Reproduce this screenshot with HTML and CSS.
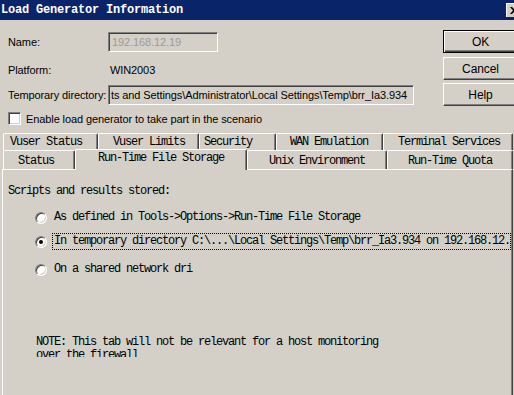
FILE: index.html
```html
<!DOCTYPE html>
<html>
<head>
<meta charset="utf-8">
<link rel="stylesheet" href="styles.css">
</head>
<body>
<div class="win">
  <div class="title">
    <span class="title-text">Load Generator Information</span>
    <span class="close"><svg width="8" height="7" viewBox="0 0 8 7"><path d="M0 0h2l2 2 2-2h2L5 3.5 8 7H6L4 5 2 7H0l3-3.5z" fill="#000"/></svg></span>
  </div>
  <div class="top">
    <div class="form">
      <div class="row r-name"><span class="lbl">Name:</span><div class="field f-name">192.168.12.19</div></div>
      <div class="row r-plat"><span class="lbl">Platform:</span><span class="val">WIN2003</span></div>
      <div class="row r-temp"><span class="lbl">Temporary directory:</span><div class="field f-temp">ts and Settings\Administrator\Local Settings\Temp\brr_Ia3.934</div></div>
      <div class="check"><span class="cbox"></span><span>Enable load generator to take part in the scenario</span></div>
    </div>
    <div class="buttons">
      <div class="btn btn-default"><span>OK</span></div>
      <div class="btn btn-cancel"><span>Cancel</span></div>
      <div class="btn btn-help"><span>Help</span></div>
    </div>
  </div>
  <div class="tabs">
    <div class="tabrow row1">
      <div class="tab t-vs">Vuser Status</div>
      <div class="tab t-vl">Vuser Limits</div>
      <div class="tab t-sec">Security</div>
      <div class="tab t-wan">WAN Emulation</div>
      <div class="tab t-ts">Terminal Services</div>
    </div>
    <div class="tabrow row2">
      <div class="tab t-st">Status</div>
      <div class="tab t-rtfs sel">Run-Time File Storage</div>
      <div class="tab t-ue">Unix Environment</div>
      <div class="tab t-rtq">Run-Time Quota</div>
    </div>
  </div>
  <div class="panel">
    <div class="heading">Scripts and results stored:</div>
    <div class="opt opt1"><span class="radio"></span><span class="otext">As defined in Tools-&gt;Options-&gt;Run-Time File Storage</span></div>
    <div class="opt opt2"><span class="radio on"></span><span class="otext focus">In temporary directory C:\...\Local Settings\Temp\brr_Ia3.934 on 192.168.12.</span></div>
    <div class="opt opt3"><span class="radio"></span><span class="otext">On a shared network dri</span></div>
    <div class="note">NOTE: This tab will not be relevant for a host monitoring<br>over the firewall</div>
  </div>
</div>
</body>
</html>
```
FILE: styles.css
```css
html, body {
  margin: 0;
  padding: 0;
}
body {
  width: 514px;
  height: 395px;
  overflow: hidden;
  background: #d4d0c8;
}
.win {
  width: 514px;
  height: 395px;
  overflow: hidden;
  background: #d4d0c8;
  font-family: "Liberation Sans", Arial, sans-serif;
  font-size: 11px;
  letter-spacing: -0.1px;
  color: #000;
}
.title {
  height: 20px;
  background: #0a246a;
  display: flex;
  align-items: center;
  padding-left: 1px;
  position: relative;
}
.title-text {
  font-family: "Liberation Mono", monospace;
  font-weight: bold;
  font-size: 12px;
  letter-spacing: -0.2px;
  color: #fff;
  line-height: 20px;
}
.close {
  position: absolute;
  left: 506px;
  top: 3px;
  width: 16px;
  height: 14px;
  background: #d4d0c8;
  box-sizing: border-box;
  border-top: 1px solid #fff;
  border-left: 1px solid #fff;
  display: flex;
  align-items: center;
  padding-left: 3px;
}
.top {
  display: flex;
  width: 520px;
}
.form {
  width: 435px;
  padding-left: 8px;
  flex-shrink: 0;
}
.row {
  display: flex;
  align-items: center;
  height: 20px;
}
.r-name { margin-top: 12px; }
.r-plat { margin-top: 8px; }
.r-temp { margin-top: 5px; }
.lbl {
  width: 100px;
  flex-shrink: 0;
  white-space: nowrap;
}
.val {
  padding-left: 2px;
}
.field {
  height: 20px;
  box-sizing: border-box;
  border-top: 1px solid #808080;
  border-left: 1px solid #808080;
  border-right: 1px solid #fff;
  border-bottom: 1px solid #fff;
  box-shadow: inset 1px 1px 0 #404040, inset -1px -1px 0 #d4d0c8;
  padding: 0 3px;
  line-height: 18px;
  white-space: nowrap;
  overflow: hidden;
}
.f-name {
  width: 110px;
  color: #9a9a9a;
}
.f-temp {
  width: 306px;
  padding-left: 2px;
}
.check {
  margin-top: 7px;
  height: 13px;
  display: flex;
  align-items: center;
  white-space: nowrap;
}
.cbox {
  width: 13px;
  height: 13px;
  box-sizing: border-box;
  background: #fff;
  border-top: 1px solid #808080;
  border-left: 1px solid #808080;
  border-right: 1px solid #fff;
  border-bottom: 1px solid #fff;
  box-shadow: inset 1px 1px 0 #404040, inset -1px -1px 0 #d4d0c8;
  margin-right: 5px;
  flex-shrink: 0;
}
.buttons {
  width: 75px;
  flex-shrink: 0;
  padding-top: 10px;
  display: flex;
  flex-direction: column;
  gap: 3px;
}
.btn {
  height: 23px;
  box-sizing: border-box;
  border-top: 1px solid #fff;
  border-left: 1px solid #fff;
  border-right: 1px solid #404040;
  border-bottom: 1px solid #404040;
  box-shadow: inset -1px -1px 0 #808080;
  display: flex;
  align-items: center;
  justify-content: center;
  font-size: 12px;
}
.btn-default {
  border: 1px solid #000;
  box-shadow: inset 1px 1px 0 #fff, inset -1px -1px 0 #404040, inset -2px -2px 0 #808080;
  margin-bottom: 1px;
}
.tabs {
  margin-top: 8px;
  font-family: "Liberation Mono", monospace;
  font-size: 12px;
  letter-spacing: -1.2px;
}
.tabrow {
  display: flex;
  padding-left: 3px;
}
.row1 {
  height: 17px;
}
.row2 {
  height: 19px;
  align-items: flex-end;
}
.tab {
  box-sizing: border-box;
  border-top: 1px solid #fff;
  border-left: 1px solid #fff;
  border-right: 1px solid #404040;
  box-shadow: inset -1px 0 0 #808080;
  border-radius: 2px 2px 0 0;
  white-space: nowrap;
  overflow: hidden;
}
.row1 .tab {
  height: 17px;
  line-height: 17px;
}
.row2 .tab {
  height: 19px;
  line-height: 20px;
}
.row2 .tab.sel {
  height: 21px;
  line-height: 17px;
  position: relative;
  z-index: 2;
  background: #d4d0c8;
  margin-bottom: -1px;
}
.t-vs { width: 95px; padding-left: 6px; }
.t-vl { width: 101px; padding-left: 14px; }
.t-sec { width: 77px; padding-left: 4px; }
.t-wan { width: 107px; padding-left: 13px; }
.t-ts { width: 130px; padding-left: 14px; }
.t-st { width: 72px; padding-left: 14px; }
.t-rtfs { width: 172px; padding-left: 22px; }
.t-ue { width: 140px; padding-left: 21px; }
.t-rtq { width: 126px; padding-left: 20px; }
.panel {
  margin-left: 2px;
  width: 511px;
  height: 230px;
  box-sizing: border-box;
  border-top: 1px solid #fff;
  border-left: 1px solid #fff;
  border-right: 1px solid #404040;
  box-shadow: inset -1px 0 0 #808080;
  position: relative;
  z-index: 1;
  font-family: "Liberation Mono", monospace;
  font-size: 12px;
  letter-spacing: -1.2px;
  padding-top: 15px;
}
.heading {
  padding-left: 5px;
  line-height: 12px;
}
.opt {
  display: flex;
  align-items: center;
  height: 17px;
  padding-left: 32px;
  white-space: nowrap;
}
.opt1 { margin-top: 12px; }
.opt2 { margin-top: 7px; }
.opt3 { margin-top: 11px; }
.radio {
  width: 12px;
  height: 12px;
  box-sizing: border-box;
  border-radius: 50%;
  background: #fff;
  border: 1px solid;
  border-color: #808080 #fff #fff #808080;
  box-shadow: inset 1px 1px 0 #404040, inset -1px -1px 0 #d4d0c8;
  flex-shrink: 0;
  margin-right: 5px;
  display: flex;
  align-items: center;
  justify-content: center;
}
.radio.on::after {
  content: "";
  width: 4px;
  height: 4px;
  border-radius: 50%;
  background: #000;
}
.otext {
  line-height: 15px;
  padding: 0 1px;
  border: 1px solid transparent;
}
.otext.focus {
  border: 1px dotted #000;
  width: 459px;
  box-sizing: border-box;
}
.note {
  margin-top: 58px;
  padding-left: 33px;
  line-height: 13px;
  height: 21px;
  overflow: hidden;
  white-space: nowrap;
}
```
